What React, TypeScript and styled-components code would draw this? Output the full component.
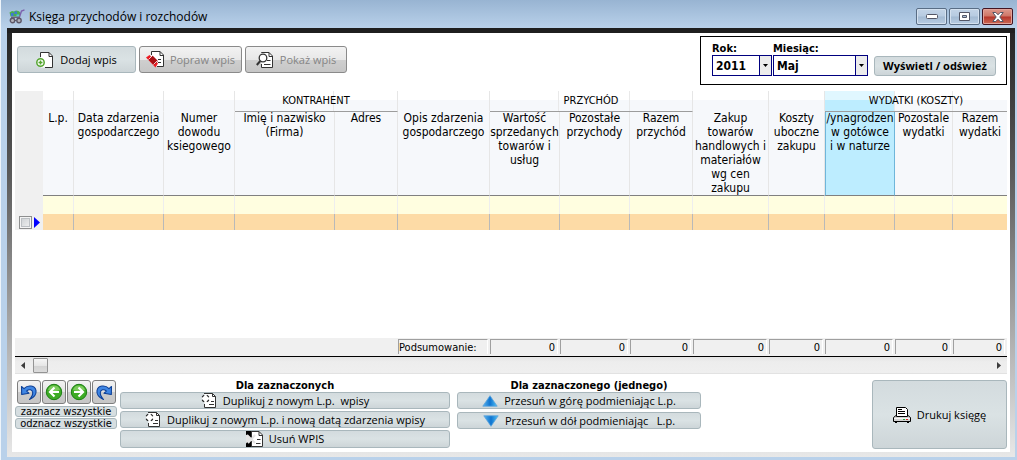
import React from 'react';
import styled, { createGlobalStyle, css } from 'styled-components';

const GlobalStyle = createGlobalStyle`
  *, *::before, *::after { box-sizing: border-box; }
  body { margin: 0; background: #b9d1ea; }
  button, select, input { font: inherit; color: inherit; margin: 0; }
`;

const tahoma = `"DejaVu Sans Condensed", "Liberation Sans", sans-serif`;
const segoe = `"Open Sans", "Noto Sans", sans-serif`;

const Window = styled.div`
  display: flex;
  flex-direction: column;
  min-height: 100vh;
  padding: 0 2px 3px 6px;
  border-left: 1px solid #eef4fa;
  background: linear-gradient(#98b4d2 0, #b9d1ea 28px, #b9d1ea 100%);
  font-family: ${tahoma};
  font-size: 12px;
  color: #000;
`;

const TitleBar = styled.header`
  display: flex;
  align-items: center;
  height: 28px;
  padding: 5px 2px 0 2px;
  gap: 4px;
`;

const Title = styled.h1`
  flex: 1;
  margin: 0;
  font-family: ${segoe};
  font-size: 12px;
  font-weight: 400;
  line-height: 20px;
`;

const WindowControls = styled.div`
  display: flex;
  gap: 2px;
`;

const WindowButton = styled.button<{ $close?: boolean }>`
  display: grid;
  place-items: center;
  width: 31px;
  height: 17px;
  padding: 0;
  border: 1px solid ${p => (p.$close ? '#431422' : '#596d85')};
  border-radius: 2px;
  box-shadow: inset 0 0 0 1px ${p => (p.$close ? '#e2a39a' : '#d4e1ef')};
  background: ${p =>
    p.$close
      ? 'linear-gradient(#dd9a8e 0, #cf7565 48%, #b6352a 52%, #cc6a55 100%)'
      : 'linear-gradient(#c3d4e7 0, #b7cbe1 48%, #a3bad3 52%, #b8cce2 100%)'};
`;

const Frame = styled.div`
  display: flex;
  flex: 1;
  padding: 5px;
  background:
    linear-gradient(#1f1f1f, #1f1f1f) 0 0 / 100% 5px no-repeat,
    linear-gradient(#232323 0, #5c5c5c 35%, #b4b4b4 75%, #e8e8e8 100%);
`;

const Client = styled.main`
  display: flex;
  flex: 1;
  flex-direction: column;
  min-width: 0;
  padding: 3px;
  background: #fff;
`;

const Toolbar = styled.div`
  display: flex;
  justify-content: space-between;
  align-items: flex-start;
  padding-left: 2px;
`;

const ToolbarButtons = styled.div`
  display: flex;
  gap: 3px;
  padding-top: 10px;
`;

const Button = styled.button<{ $width?: number; $height: number; $bold?: boolean }>`
  display: flex;
  align-items: center;
  justify-content: center;
  gap: 6px;
  width: ${p => (p.$width ? `${p.$width}px` : '100%')};
  height: ${p => p.$height}px;
  padding: 0;
  border: 1px solid #a9b7bc;
  border-radius: 3px;
  background: linear-gradient(#d3dbde 0, #dae2e4 50%, #cdd5d8 100%);
  font-family: ${segoe};
  font-size: 11px;
  font-weight: ${p => (p.$bold ? 700 : 400)};
  line-height: 14px;
  white-space: pre;

  &:disabled {
    border-color: #8a8a8a;
    background: linear-gradient(#f2f2f2 0, #e8e8e8 50%, #cfcfcf 52%, #c6c6c6 100%);
    color: #858585;
  }

  svg { flex: none; }
`;

const FilterBox = styled.form`
  display: flex;
  align-items: flex-end;
  height: 49px;
  padding: 0 10px 8px 11px;
  border: 1px solid #000;
`;

const Field = styled.div<{ $width: number }>`
  width: ${p => p.$width}px;
  margin-right: 1px;
`;

const FieldLabel = styled.label`
  display: block;
  font-size: 11px;
  font-weight: 700;
  line-height: 13px;
`;

const SelectBox = styled.div`
  position: relative;

  svg {
    position: absolute;
    top: 9px;
    right: 4px;
    pointer-events: none;
  }
`;

const Select = styled.select`
  display: block;
  width: 100%;
  height: 21px;
  padding: 0 16px 0 3px;
  appearance: none;
  border: 1px solid #00007f;
  border-radius: 0;
  background:
    linear-gradient(90deg, #00007f 1px, #ececec 1px) right / 12px 100% no-repeat,
    #fff;
  font-weight: 700;
`;

const FilterAction = styled.div`
  padding-left: 5px;
`;

const Grid = styled.section`
  display: flex;
  flex: 1;
  flex-direction: column;
  justify-content: space-between;
  margin-top: 6px;
`;

const Table = styled.table`
  width: 100%;
  table-layout: fixed;
  border-collapse: separate;
  border-spacing: 0;

  th, td { padding: 0; }
`;

const separator = 'linear-gradient(#e9e9e9, #e9e9e9)';

const GroupCell = styled.th<{ $grouped?: boolean; $splits?: number[]; $active?: number }>`
  height: 21px;
  border-right: 1px solid #e6e6e6;
  border-bottom: 1px solid ${p => (p.$grouped ? '#9c9c9c' : '#f6f8fb')};
  font-size: 11px;
  font-weight: 400;
  line-height: 20px;
  white-space: nowrap;
  background:
    ${p => (p.$splits ?? []).map(s => `${separator} ${s}% 0 / 1px 100% no-repeat,`).join(' ')}
    ${p =>
      p.$active
        ? `linear-gradient(#e0f7ff 9px, #bdedff 9px) 0 0 / ${p.$active}% 100% no-repeat,`
        : ''}
    linear-gradient(#fff 9px, #f6f8fb 9px);

  &:last-child { border-right: 0; }
`;

const HeadCell = styled.th<{ $active?: boolean }>`
  height: 84px;
  overflow: hidden;
  vertical-align: top;
  border-right: 1px solid #e6e6e6;
  border-bottom: 1px solid #808080;
  background-color: #f6f8fb;
  font-weight: 400;
  line-height: 14px;
  white-space: pre;

  &:last-child { border-right: 0; }

  ${p =>
    p.$active &&
    css`
      border-left: 1px solid #6fb6da;
      border-right-color: #6fb6da;
      background-color: #bdedff;
    `}
`;

const HeadLabel = styled.span`
  display: flex;
  justify-content: center;
  margin-top: -1px;
`;

const Gutter = styled.td`
  background: #f0f0f0;
`;

const BodyCell = styled.td<{ $selected?: boolean }>`
  height: ${p => (p.$selected ? 16 : 18)}px;
  border-right: 1px solid ${p => (p.$selected ? '#b9b9b9' : '#eeeeee')};
  background: ${p => (p.$selected ? '#fddba6' : '#fffee0')};

  &:last-child { border-right: 0; }
`;

const RowMarker = styled.div`
  display: flex;
  align-items: center;
  gap: 2px;
  height: 16px;
  padding-left: 4px;
`;

const RowCheckbox = styled.input`
  width: 13px;
  height: 13px;
  appearance: none;
  border: 1px solid #8e8f8f;
  background: linear-gradient(135deg, #c9cdd0, #f4f4f4);
  box-shadow: inset 0 0 0 1px #f4f4f4, inset 0 0 0 2px #bcc0c4;
`;

const Summary = styled(Table)`
  border-bottom: 1px solid #000;
  background: #f0f0f0;

  td, th {
    height: 18px;
    padding: 1px 2px 2px 0;
    font-size: 11px;
    font-weight: 400;
  }
`;

const SummaryValue = styled.div<{ $label?: boolean }>`
  height: 15px;
  padding-right: 2px;
  border-top: 1px solid #9f9f9f;
  border-left: 1px solid #9f9f9f;
  border-right: 1px solid #fff;
  line-height: 15px;
  text-align: ${p => (p.$label ? 'left' : 'right')};
`;

const ScrollBar = styled.div`
  display: flex;
  align-items: center;
  height: 17px;
  padding: 0 6px;
  border-bottom: 1px solid #e2e2e2;
  background: linear-gradient(#e4e4e4, #ededed 30%, #efefef);
`;

const ScrollTrack = styled.div`
  flex: 1;
  padding: 0 8px;
`;

const ScrollThumb = styled.div`
  width: 15px;
  height: 15px;
  border: 1px solid #949494;
  border-radius: 1px;
  background: linear-gradient(#f5f5f5, #e6e6e6 50%, #d2d2d2 52%, #dcdcdc);
`;

const Footer = styled.footer`
  display: flex;
  align-items: flex-start;
  padding-top: 6px;
`;

const NavColumn = styled.div`
  display: flex;
  flex-direction: column;
  gap: 1px;
  width: 102px;
  margin-right: 3px;
`;

const NavRow = styled.div`
  display: flex;
  gap: 1px;
  padding: 0 0 1px 2px;
`;

const NavButton = styled.button`
  display: grid;
  place-items: center;
  width: 24px;
  height: 24px;
  padding: 0;
  border: 1px solid #7e7e7e;
  border-radius: 3px;
  background: linear-gradient(#f3f3f3 0, #e4e4e4 50%, #cccccc 52%, #c6c6c6 100%);
`;

const SelectAllButton = styled.button`
  height: 11px;
  padding: 0;
  border: 1px solid #a9b7bc;
  border-radius: 3px;
  background: #d6dee1;
  font-size: 11px;
  line-height: 9px;
  white-space: nowrap;
`;

const Actions = styled.div<{ $width: number }>`
  width: ${p => p.$width}px;
  margin-right: 7px;
`;

const ActionsTitle = styled.h2<{ $shift?: boolean }>`
  height: 12px;
  margin: 0;
  padding-left: ${p => (p.$shift ? 20 : 0)}px;
  font-size: 11px;
  line-height: 11px;
  text-align: center;
`;

const ActionList = styled.div<{ $gap: number }>`
  display: flex;
  flex-direction: column;
  gap: ${p => p.$gap}px;
`;

const PrintArea = styled.div`
  margin-left: auto;
`;

type Column = { label: string; width: number; active?: boolean };

const columns: Column[] = [
  { label: 'L.p.', width: 31 },
  { label: 'Data zdarzenia\ngospodarczego', width: 90 },
  { label: 'Numer\ndowodu\nksiegowego', width: 71 },
  { label: 'Imię i nazwisko\n(Firma)', width: 100 },
  { label: 'Adres', width: 63 },
  { label: 'Opis zdarzenia\ngospodarczego', width: 92 },
  { label: 'Wartość\nsprzedanych\ntowarów i\nusług', width: 70 },
  { label: 'Pozostałe\nprzychody', width: 70 },
  { label: 'Razem\nprzychód', width: 63 },
  { label: 'Zakup\ntowarów\nhandlowych i\nmateriałów\nwg cen\nzakupu', width: 76 },
  { label: 'Koszty\nuboczne\nzakupu', width: 56 },
  { label: '/ynagrodzen\nw gotówce\ni w naturze', width: 70, active: true },
  { label: 'Pozostale\nwydatki', width: 58 },
  { label: 'Razem\nwydatki', width: 54 },
];

const Columns = () => (
  <colgroup>
    <col style={{ width: 28 }} />
    {columns.map((c, i) => (
      <col key={i} style={{ width: c.width }} />
    ))}
  </colgroup>
);

const AppIcon = () => (
  <svg width="16" height="15" viewBox="0 0 16 15">
    <path d="M.5 3.500L3 2l2 .5L7 1.500l2.500 .5 2 1.500L10.500 7.500h-9z" fill="#4cae50" />
    <path d="M2 4h2.500v3H2zM5.500 2.500H8V5H5.500z" fill="#3f77d6" />
    <path d="M7.500 5.500h2.500v2H7.500z" fill="#56c4d8" />
    <path d="M10.500 8l2-6L15.500 .8" stroke="#7d62ae" strokeWidth="1.400" fill="none" />
    <path d="M2 8.300h9" stroke="#6c6480" strokeWidth="1.400" />
    <circle cx="3.500" cy="11.500" r="2.200" fill="#b5b5bd" stroke="#5d5868" strokeWidth="1.400" />
    <circle cx="10" cy="11.500" r="2.200" fill="#b5b5bd" stroke="#5d5868" strokeWidth="1.400" />
    <path d="M6 11.500h1.500" stroke="#5d5868" />
  </svg>
);

const AddIcon = () => (
  <svg width="18" height="16" viewBox="0 0 18 16">
    <path d="M5 .5H13l3.500 3.500V15.500H5z" fill="#fff" />
    <path d="M4.500 5V.5H13l3.500 3.500V15.500H9M13 .5V4.500h3.500" fill="none" stroke="#333" />
    <circle cx="4.500" cy="10.500" r="3.700" fill="#fff" stroke="#55a630" strokeWidth="1.500" />
    <path d="M4.500 8.500v4M2.500 10.500h4" stroke="#55a630" strokeWidth="1.500" />
  </svg>
);

const EditIcon = () => (
  <svg width="18" height="17" viewBox="0 0 18 17">
    <path d="M5.500 4V.5H14l3.500 3.500V15.500H9z" fill="#fff" />
    <path d="M5.500 4V.5H14l3.500 3.500V15.500H11M14 .5V4.500h3.500M12 8.500h3M12 11.500h3" fill="none" stroke="#333" />
    <path d="M0 6.500L3.500 4 12 12.500 9.500 16.500z" fill="#ed1c24" />
    <path d="M2.500 8.500l4-4 5.500 5.500-4 4z" fill="#a80f14" />
    <path d="M2.500 8.500l4-4M7.500 13.500l4-4" stroke="#fff" strokeWidth=".8" />
  </svg>
);

const ViewIcon = () => (
  <svg width="18" height="16" viewBox="0 0 18 16">
    <path d="M5.500 .5H13l3.500 3.500V15.500H5.500z" fill="#fff" />
    <path d="M5.500 1V.5H13l3.500 3.500V15.500H5.500V12M13 .5V4.500h3.500M11 8.500h3.500M8 12.500h6.500" fill="none" stroke="#333" />
    <circle cx="7" cy="6" r="3.800" fill="#fff" stroke="#333" strokeWidth="1.300" />
    <path d="M4.300 9L.8 13" stroke="#333" strokeWidth="2" />
  </svg>
);

const CopyIcon = () => (
  <svg width="16" height="16" viewBox="0 0 16 16">
    <path d="M3.500 .5H11.500L14.500 3.500V14.500H3.500z" fill="#fff" />
    <path d="M3 .5H11.500L14.500 3.500V14.500H3.500V11M11.500 .5V3.500h3M10 8.500h3M8 11.500h5" fill="none" stroke="#333" />
    <circle cx="4.500" cy="5.500" r="3.500" fill="#fff" />
    <path
      d="M3.200 2.300A3.600 3.600 0 0 0 1.200 4.300M1.200 6.700A3.600 3.600 0 0 0 3.200 8.700M5.800 8.700A3.600 3.600 0 0 0 7.800 6.700M7.800 4.300A3.600 3.600 0 0 0 5.800 2.300"
      fill="none"
      stroke="#222"
      strokeWidth="1.200"
    />
  </svg>
);

const DeleteIcon = () => (
  <svg width="17" height="16" viewBox="0 0 17 16">
    <path d="M0 0h6v16H0z" fill="#000" />
    <path d="M5.500 .5H13l3.500 3.500V15.500H5.500z" fill="#fff" stroke="#333" />
    <path d="M13 .5V4.500h3.500M11 8.500h3.500M10 12.500h4.500" fill="none" stroke="#333" />
    <path d="M0 5v6l3-3zM1 4l8 8M9 4l-7 8" fill="#e4e4e4" stroke="#e4e4e4" strokeWidth="2" />
  </svg>
);

const Triangle = ({ down }: { down?: boolean }) => (
  <svg width="16" height="12" viewBox="0 0 16 12">
    <defs>
      <linearGradient id={down ? 'td' : 'tu'} x1="0" x2="1">
        <stop offset="0" stopColor="#58b4ee" />
        <stop offset=".5" stopColor="#0f74d0" />
        <stop offset="1" stopColor="#4fc3f7" />
      </linearGradient>
    </defs>
    <path
      d={down ? 'M.8 .8h14.400L8 11.300z' : 'M.8 11.200h14.400L8 .7z'}
      fill={`url(#${down ? 'td' : 'tu'})`}
      stroke="#5aa2da"
      strokeWidth=".8"
    />
  </svg>
);

const PrinterIcon = () => (
  <svg width="18" height="16" viewBox="0 0 18 16">
    <path d="M1 9.500h16v5H1z" fill="#d4d4d4" />
    <path d="M3.500 9.500V.5H12.500L14.500 2.500V9.500z" fill="#fff" stroke="#000" />
    <path d="M5 2.500h4M5 4.500h7M5 6.500h7" stroke="#000" />
    <path d="M3 8.500L.5 10.500v4h17v-4L15 8.500" fill="none" stroke="#000" />
    <path d="M1 11.500h16" stroke="#f6f6f6" />
    <path d="M10 12.500h2" stroke="#1fae3a" />
    <path d="M13 12.500h2" stroke="#e02020" />
    <path d="M2 15.500h2M14 15.500h2" stroke="#000" />
  </svg>
);

const TurnIcon = ({ flip }: { flip?: boolean }) => (
  <svg width="18" height="18" viewBox="0 0 18 18">
    <g transform={flip ? 'translate(18 0) scale(-1 1)' : undefined}>
      <path
        d="M1.500 3.500L1.700 11.500 9 10.300 6.700 8C9 5.800 12.300 6.500 12.700 9.500 13 12 11.500 14.200 9.500 16.500 14 14.700 16.700 11 16 7.500 15 2.500 8 1.300 4 5.600z"
        fill="#3f86e4"
        stroke="#0c3f96"
        strokeWidth="1.100"
        strokeLinejoin="round"
      />
    </g>
  </svg>
);

const CircleArrow = ({ right }: { right?: boolean }) => (
  <svg width="18" height="18" viewBox="0 0 18 18">
    <circle cx="9" cy="9" r="7.700" fill="#3dab25" stroke="#1c7f12" />
    <path d="M3 7a6.300 6.300 0 0 1 12 0q-6 2-12 0z" fill="#7ccc5c" />
    <g transform={right ? 'translate(18 0) scale(-1 1)' : undefined}>
      <path d="M9.500 4.500L5 9l4.500 4.500M5.500 9H14" fill="none" stroke="#fff" strokeWidth="2.200" />
    </g>
  </svg>
);

const DropArrow = () => (
  <svg width="5" height="3" viewBox="0 0 5 3">
    <path d="M0 0h5L2.500 3z" fill="#000" />
  </svg>
);

const ScrollArrow = ({ right }: { right?: boolean }) => (
  <svg width="4" height="7" viewBox="0 0 4 7">
    <path d={right ? 'M0 0v7l4-3.500z' : 'M4 0v7L0 3.500z'} fill="#3c3c3c" />
  </svg>
);

export default function App() {
  return (
    <>
      <GlobalStyle />
      <Window>
        <TitleBar>
          <AppIcon />
          <Title>Księga przychodów i rozchodów</Title>
          <WindowControls>
            <WindowButton aria-label="Minimalizuj">
              <svg width="12" height="5" viewBox="0 0 12 5">
                <rect x=".5" y=".5" width="11" height="4" rx="1" fill="#fff" stroke="#535666" />
              </svg>
            </WindowButton>
            <WindowButton aria-label="Maksymalizuj">
              <svg width="11" height="9" viewBox="0 0 11 9">
                <path d="M.5 .5h10v8H.5zM3.500 3.500v2h4v-2z" fill="#fff" fillRule="evenodd" stroke="#535666" />
              </svg>
            </WindowButton>
            <WindowButton $close aria-label="Zamknij">
              <svg width="12" height="10" viewBox="0 0 12 10">
                <path d="M.8 .5h3L6 2.800 8.200 .5h3L7.800 5l3.400 4.500h-3L6 7.200 3.800 9.500h-3L4.200 5z" fill="#fff" stroke="#535666" />
              </svg>
            </WindowButton>
          </WindowControls>
        </TitleBar>
        <Frame>
          <Client>
            <Toolbar>
              <ToolbarButtons>
                <Button $width={119} $height={27}><AddIcon />Dodaj wpis</Button>
                <Button $width={103} $height={27} disabled><EditIcon />Popraw wpis</Button>
                <Button $width={102} $height={27} disabled><ViewIcon />Pokaż wpis</Button>
              </ToolbarButtons>
              <FilterBox onSubmit={e => e.preventDefault()}>
                <Field $width={60}>
                  <FieldLabel htmlFor="rok">Rok:</FieldLabel>
                  <SelectBox>
                    <Select id="rok" defaultValue="2011"><option>2011</option></Select>
                    <DropArrow />
                  </SelectBox>
                </Field>
                <Field $width={95}>
                  <FieldLabel htmlFor="miesiac">Miesiąc:</FieldLabel>
                  <SelectBox>
                    <Select id="miesiac" defaultValue="Maj"><option>Maj</option></Select>
                    <DropArrow />
                  </SelectBox>
                </Field>
                <FilterAction>
                  <Button $width={122} $height={20} $bold>Wyświetl / odśwież</Button>
                </FilterAction>
              </FilterBox>
            </Toolbar>

            <Grid>
              <Table>
                <Columns />
                <thead>
                  <tr>
                    <Gutter rowSpan={2} />
                    <GroupCell /><GroupCell /><GroupCell />
                    <GroupCell colSpan={2} $grouped $splits={[61]}>KONTRAHENT</GroupCell>
                    <GroupCell />
                    <GroupCell colSpan={3} $grouped $splits={[34, 69]}>PRZYCHÓD</GroupCell>
                    <GroupCell /><GroupCell />
                    <GroupCell colSpan={3} $grouped $splits={[38, 70]} $active={38}>WYDATKI (KOSZTY)</GroupCell>
                  </tr>
                  <tr>
                    {columns.map((c, i) => (
                      <HeadCell key={i} scope="col" $active={c.active}>
                        <HeadLabel>{c.label}</HeadLabel>
                      </HeadCell>
                    ))}
                  </tr>
                </thead>
                <tbody>
                  <tr>
                    <Gutter />
                    {columns.map((_, i) => <BodyCell key={i} />)}
                  </tr>
                  <tr>
                    <Gutter>
                      <RowMarker>
                        <RowCheckbox type="checkbox" aria-label="Zaznacz wpis" />
                        <svg width="6" height="11" viewBox="0 0 6 11">
                          <path d="M0 0l6 5.500L0 11z" fill="#0000ff" />
                        </svg>
                      </RowMarker>
                    </Gutter>
                    {columns.map((_, i) => <BodyCell key={i} $selected />)}
                  </tr>
                </tbody>
              </Table>
              <div>
                <Summary>
                  <Columns />
                  <tbody>
                    <tr>
                      <td colSpan={6} />
                      <th scope="row"><SummaryValue $label>Podsumowanie:</SummaryValue></th>
                      {columns.slice(6).map((_, i) => (
                        <td key={i}><SummaryValue>0</SummaryValue></td>
                      ))}
                    </tr>
                  </tbody>
                </Summary>
                <ScrollBar>
                  <ScrollArrow />
                  <ScrollTrack><ScrollThumb /></ScrollTrack>
                  <ScrollArrow right />
                </ScrollBar>
              </div>
            </Grid>

            <Footer>
              <NavColumn>
                <NavRow>
                  <NavButton aria-label="Pierwszy"><TurnIcon /></NavButton>
                  <NavButton aria-label="Poprzedni"><CircleArrow /></NavButton>
                  <NavButton aria-label="Następny"><CircleArrow right /></NavButton>
                  <NavButton aria-label="Ostatni"><TurnIcon flip /></NavButton>
                </NavRow>
                <SelectAllButton>zaznacz wszystkie</SelectAllButton>
                <SelectAllButton>odznacz wszystkie</SelectAllButton>
              </NavColumn>
              <Actions $width={330}>
                <ActionsTitle>Dla zaznaczonych</ActionsTitle>
                <ActionList $gap={2}>
                  <Button $height={17}><CopyIcon />{'Duplikuj z nowym L.p.  wpisy'}</Button>
                  <Button $height={17}><CopyIcon />Duplikuj z nowym L.p. i nową datą zdarzenia wpisy</Button>
                  <Button $height={18}><DeleteIcon />Usuń WPIS</Button>
                </ActionList>
              </Actions>
              <Actions $width={244}>
                <ActionsTitle $shift>Dla zaznaczonego (jednego)</ActionsTitle>
                <ActionList $gap={3}>
                  <Button $height={17}><Triangle />Przesuń w górę podmieniając L.p.</Button>
                  <Button $height={17}><Triangle down />{'Przesuń w dół podmieniając   L.p.'}</Button>
                </ActionList>
              </Actions>
              <PrintArea>
                <Button $width={135} $height={69}><PrinterIcon />Drukuj księgę</Button>
              </PrintArea>
            </Footer>
          </Client>
        </Frame>
      </Window>
    </>
  );
}
